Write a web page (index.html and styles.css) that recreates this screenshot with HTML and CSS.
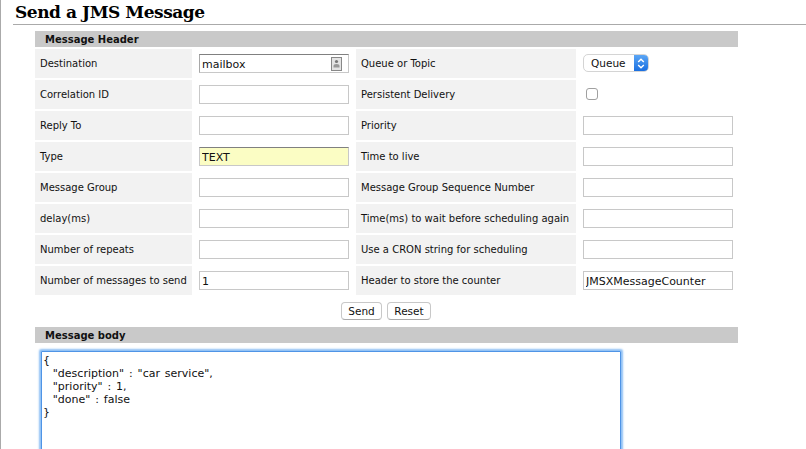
FILE: index.html
```html
<!DOCTYPE html>
<html lang="en">

<head>
   <meta charset="UTF-8">
   <title>Send a JMS Message</title>
   <link rel="stylesheet" href="styles.css">
</head>

<body>
   <h1 class="title">Send a JMS Message</h1>
   <form class="send-form">
      <h2 class="band">Message Header</h2>
      <div class="fields">
         <label class="name">Destination</label>
         <div class="value">
            <div class="dest">
               <input type="text" class="field field-dest" value="mailbox">
               <svg class="contact-icon" width="11" height="14" viewBox="0 0 11 14">
                  <rect x="0.5" y="0.5" width="10" height="13" fill="#e4e4e4" stroke="#888"/>
                  <circle cx="5.5" cy="4.5" r="1.6" fill="#777"/>
                  <path d="M2.5 10.5 V9 Q2.5 7 5.5 7 Q8.5 7 8.5 9 V10.5 Z" fill="#999"/>
               </svg>
            </div>
         </div>
         <label class="name">Queue or Topic</label>
         <div class="value">
            <div class="select-box">
               <span class="select-text">Queue</span>
               <span class="select-arrows">
                  <svg width="8" height="11" viewBox="0 0 8 11" fill="none" stroke="#fff" stroke-width="1.4">
                     <path d="M1.2 4 L4 1.2 L6.8 4"/>
                     <path d="M1.2 7 L4 9.8 L6.8 7"/>
                  </svg>
               </span>
            </div>
         </div>

         <label class="name">Correlation ID</label>
         <div class="value"><input type="text" class="field"></div>
         <label class="name">Persistent Delivery</label>
         <div class="value"><span class="check"></span></div>

         <label class="name">Reply To</label>
         <div class="value"><input type="text" class="field"></div>
         <label class="name">Priority</label>
         <div class="value"><input type="text" class="field"></div>

         <label class="name">Type</label>
         <div class="value"><input type="text" class="field field-filled" value="TEXT"></div>
         <label class="name">Time to live</label>
         <div class="value"><input type="text" class="field"></div>

         <label class="name">Message Group</label>
         <div class="value"><input type="text" class="field"></div>
         <label class="name">Message Group Sequence Number</label>
         <div class="value"><input type="text" class="field"></div>

         <label class="name">delay(ms)</label>
         <div class="value"><input type="text" class="field"></div>
         <label class="name">Time(ms) to wait before scheduling again</label>
         <div class="value"><input type="text" class="field"></div>

         <label class="name">Number of repeats</label>
         <div class="value"><input type="text" class="field"></div>
         <label class="name">Use a CRON string for scheduling</label>
         <div class="value"><input type="text" class="field"></div>

         <label class="name">Number of messages to send</label>
         <div class="value"><input type="text" class="field" value="1"></div>
         <label class="name">Header to store the counter</label>
         <div class="value"><input type="text" class="field" value="JMSXMessageCounter"></div>
      </div>

      <div class="buttons">
         <button type="button" class="btn">Send</button>
         <button type="button" class="btn">Reset</button>
      </div>

      <h2 class="band">Message body</h2>
      <div class="body-wrap">
         <textarea class="body-text" spellcheck="false">{
  "description" : "car service",
  "priority" : 1,
  "done" : false
}</textarea>
      </div>
   </form>
</body>

</html>
```

FILE: styles.css
```css
html {
   margin: 0;
   padding: 0;
   height: 449px;
   overflow: hidden;
}

body {
   margin: 0;
   height: 449px;
   overflow: hidden;
   border-left: 1px solid #aaa;
   padding-left: 12px;
   background-color: #fff;
   font-family: 'DejaVu Sans', sans-serif;
   font-size: 10px;
   color: #111;
}

.title {
   margin: 0;
   height: 24px;
   padding-left: 2px;
   border-bottom: 1px solid #aaa;
   font-family: 'DejaVu Serif', serif;
   font-size: 17px;
   font-weight: bold;
   letter-spacing: -0.45px;
   line-height: 24px;
   color: #000;
}

.send-form {
   width: 703px;
   margin-left: 22px;
   padding-top: 6px;
}

.band {
   margin: 0;
   height: 16px;
   padding-left: 10px;
   background-color: #c9c9c9;
   font-size: 10px;
   font-weight: bold;
   line-height: 17px;
   color: #111;
}

.fields {
   display: grid;
   grid-template-columns: 157px 164px 220px 162px;
   grid-auto-rows: 29px;
   row-gap: 2px;
   margin-top: 2px;
}

.name {
   display: flex;
   align-items: center;
   padding-left: 5px;
   background-color: #f2f2f2;
   white-space: nowrap;
}

.value {
   display: flex;
   align-items: center;
   padding-left: 7px;
}

.field {
   box-sizing: border-box;
   width: 150px;
   height: 19px;
   margin: 0;
   padding: 2px 2px 0;
   border: 1px solid #c8c8c8;
   background-color: #fff;
   font-family: 'DejaVu Sans', sans-serif;
   font-size: 11px;
   color: #111;
   outline: none;
}

.dest {
   position: relative;
   display: flex;
}

.field-dest {
   border-top-color: #808080;
   border-left-color: #a8a8a8;
}

.contact-icon {
   position: absolute;
   top: 3px;
   right: 7px;
}

.field-filled {
   background-color: #fbfdc4;
   border-top-color: #808080;
}

.select-box {
   display: flex;
   box-sizing: border-box;
   width: 66px;
   height: 18px;
   margin-bottom: 1px;
   border: 1px solid #d4d4d4;
   border-radius: 5px;
   overflow: hidden;
   background-color: #fff;
}

.select-text {
   flex: 1;
   padding-left: 7px;
   font-size: 10.5px;
   line-height: 17px;
   color: #111;
}

.select-arrows {
   display: flex;
   align-items: center;
   justify-content: center;
   width: 14px;
   background: linear-gradient(#5ba6f5, #1a6fe0);
}

.check {
   box-sizing: border-box;
   width: 12px;
   height: 12px;
   margin-left: 3px;
   margin-bottom: 2px;
   border: 1px solid #a0a0a0;
   border-radius: 3px;
   background-color: #fff;
}

.buttons {
   display: flex;
   justify-content: center;
   gap: 5px;
   padding-right: 1px;
   margin-top: 7px;
   margin-bottom: 7px;
}

.btn {
   box-sizing: border-box;
   width: 41px;
   height: 18px;
   margin: 0;
   padding: 0;
   border: 1px solid #c8c8c8;
   border-bottom-color: #aaa;
   border-radius: 4px;
   background-color: #fff;
   font-family: 'DejaVu Sans', sans-serif;
   font-size: 10.5px;
   color: #111;
}

.btn + .btn {
   width: 44px;
}

.body-wrap {
   height: 106px;
   padding: 8px 0 0 6px;
   overflow: hidden;
}

.body-text {
   display: block;
   box-sizing: border-box;
   width: 580px;
   height: 200px;
   margin: 0;
   padding: 2px 2px 0 1px;
   border: 1px solid #4f94e6;
   border-radius: 1px;
   box-shadow: 0 0 2px 1.5px #8fc0f5;
   font-family: 'DejaVu Sans', sans-serif;
   font-size: 11px;
   word-spacing: 1.4px;
   line-height: 13px;
   color: #111;
   outline: none;
   resize: none;
}
```
